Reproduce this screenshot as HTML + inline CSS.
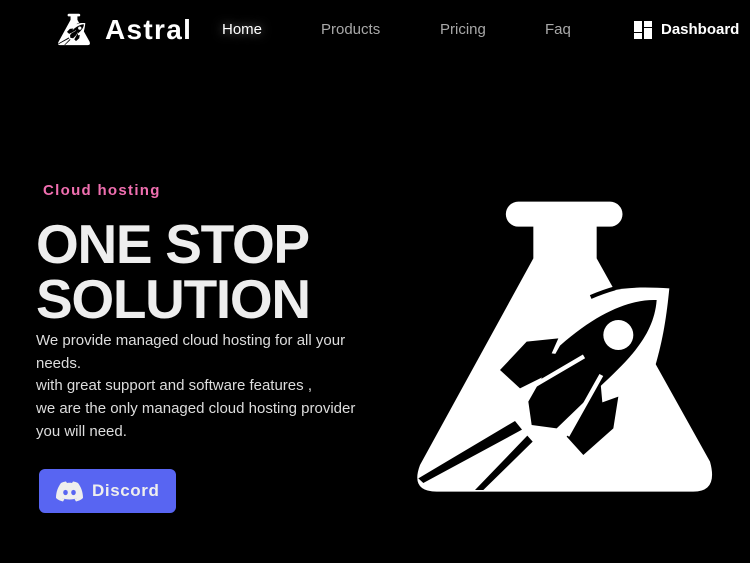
<!DOCTYPE html>
<html><head><meta charset="utf-8"><style>
*{margin:0;padding:0;box-sizing:border-box}
body{width:750px;height:563px;background:#000;overflow:hidden;position:relative;font-family:"Liberation Sans",sans-serif;color:#fff}
.abs{position:absolute;white-space:nowrap}
.nav{font-size:15px;color:#a8a8a8;top:21px}
</style></head><body>
<svg width="0" height="0" style="position:absolute"><defs><g id="fl">
<path fill="#fff" d="M355,20 H630 A35,35 0 0 1 630,95 H590 V190 L930,800 Q955,890 880,890 H110 Q30,890 60,810 L400,190 V95 H355 A35,35 0 0 1 355,20 Z"/>
<path fill="#fff" d="M560,310 C650,272 730,276 808,280 C800,360 790,430 765,515 L600,420 Z"/>
<path fill="none" stroke="#000" stroke-width="12" d="M572,306 C600,294 620,287 645,280"/>
<path fill="#000" d="M770,315 C700,312 600,345 480,452 L385,620 L395,690 L470,700 L605,570 C690,490 762,420 770,315 Z"/>
<path fill="#000" d="M300,525 L380,440 L475,430 L455,475 L548,487 L360,580 Z"/>
<path fill="#000" d="M500,725 L600,545 L607,622 L655,605 L640,700 L550,780 Z"/>
<path fill="none" stroke="#fff" stroke-width="13" d="M552,484 L368,592 M604,540 L502,722"/>
<circle cx="655" cy="420" r="45" fill="#fff"/>
<path fill="#000" d="M345,678 L366,704 L70,864 L55,850 Z M382,722 L398,740 L250,885 L225,885 Z"/>
</g></defs></svg>
<svg class="abs" style="left:56px;top:13px" width="36" height="33" viewBox="0 0 990 915"><use href="#fl"/></svg>
<div class="abs" style="left:105px;top:14px;font-size:28px;font-weight:bold;letter-spacing:1.3px">Astral</div>
<div class="abs nav" style="left:222px;color:#fff;text-shadow:0 0 10px rgba(255,255,255,.5)">Home</div>
<div class="abs nav" style="left:321px">Products</div>
<div class="abs nav" style="left:440px">Pricing</div>
<div class="abs nav" style="left:545px">Faq</div>
<svg class="abs" style="left:634px;top:21px" width="18" height="18" viewBox="0 0 18 18" fill="#fff"><rect x="0" y="0" width="8" height="11"/><rect x="0" y="12" width="8" height="6"/><rect x="10" y="0" width="8" height="6"/><rect x="10" y="7" width="8" height="11"/></svg>
<div class="abs" style="left:661px;top:21px;font-size:15px;font-weight:bold">Dashboard</div>
<div class="abs" style="left:43px;top:182px;font-size:15px;font-weight:bold;color:#f06fb0;letter-spacing:1.3px">Cloud hosting</div>
<div class="abs" style="left:36px;top:217px;font-size:55px;line-height:55px;letter-spacing:-1.3px;color:#eee;font-weight:bold">ONE STOP<br>SOLUTION</div>
<div class="abs" style="left:36px;top:330px;font-size:15px;line-height:22.7px;color:#ddd;white-space:normal;width:340px">We provide managed cloud hosting for all your needs.<br>with great support and software features ,<br>we are the only managed cloud hosting provider you will need.</div>
<div class="abs" style="left:39px;top:469px;width:137px;height:44px;background:#5865f2;border-radius:6px"></div>
<svg class="abs" style="left:55px;top:481px" width="29" height="21" viewBox="0 0 29 21"><path fill="#eee" d="M6,2 C9,0.5 11,0.5 11,0.5 L12,2 C13.5,1.7 15.5,1.7 17,2 L18,0.5 C18,0.5 20,0.5 23,2 C26,6 28,11 28,17 C26,19 23,20 21,20.5 L19.5,18 C21,17.5 22,17 22,17 C18,19 11,19 7,17 C7,17 8,17.5 9.5,18 L8,20.5 C6,20 3,19 1,17 C1,11 3,6 6,2 Z"/><ellipse cx="10.5" cy="11.5" rx="2.3" ry="2.6" fill="#5865f2"/><ellipse cx="18.5" cy="11.5" rx="2.3" ry="2.6" fill="#5865f2"/></svg>
<div class="abs" style="left:92px;top:481px;font-size:17px;font-weight:bold;color:#eee;letter-spacing:.6px">Discord</div>
<svg class="abs" style="left:400px;top:195px" width="330" height="305" viewBox="0 0 990 915"><use href="#fl"/></svg>
</body></html>
